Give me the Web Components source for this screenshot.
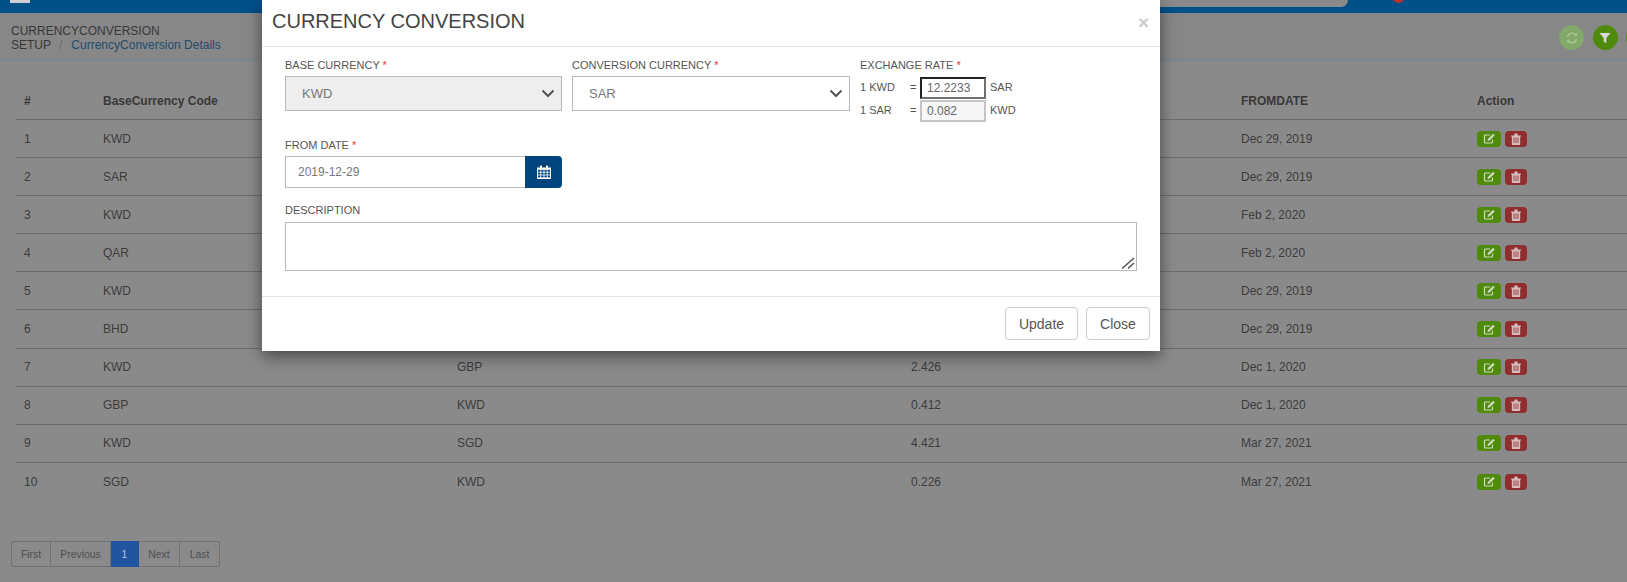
<!DOCTYPE html>
<html lang="en">
<head>
<meta charset="utf-8">
<title>Currency Conversion</title>
<style>
html,body{margin:0;padding:0;background:#8a8a8a;}
body{width:1627px;height:582px;overflow:hidden;position:relative;font-family:"Liberation Sans",Arial,sans-serif;color:#383838;}
</style>
</head>
<body>
<app-topbar></app-topbar>
<page-head></page-head>
<data-table></data-table>
<page-pager></page-pager>
<currency-modal></currency-modal>

<script>
const def=(name,html,setup)=>{
  customElements.define(name,class extends HTMLElement{
    constructor(){super();this.attachShadow({mode:'open'}).innerHTML=html;}
    connectedCallback(){if(setup)setup(this);}
  });
};
const ICONS={
  edit:`<svg width="13" height="11" viewBox="0 0 12 11"><path d="M9 6.500V9a1 1 0 0 1-1 1H2a1 1 0 0 1-1-1V3a1 1 0 0 1 1-1h4.500" fill="none" stroke="currentColor" stroke-width="1.200"/><path d="M4 8l.4-2L9.600.8l1.600 1.600L6 7.600z" fill="currentColor"/></svg>`,
  trash:`<svg width="10" height="12" viewBox="0 0 10 12"><path d="M0 2.400h10v1H9.200V11a1 1 0 0 1-1 1H1.800a1 1 0 0 1-1-1V3.400H0zM3.200 2.400L3.700.6h2.600l.5 1.800z" fill="currentColor"/><path d="M3 4.500v5.500M5 4.500v5.500M7 4.500v5.500" stroke="#8f2d2f" stroke-width=".8"/></svg>`,
  calendar:`<svg width="14" height="14" viewBox="0 0 14 14"><path d="M0 2.500h14V13a1 1 0 0 1-1 1H1a1 1 0 0 1-1-1z" fill="#fff"/><rect x="3" y="0.500" width="2" height="3" rx=".5" fill="#fff"/><rect x="9" y="0.500" width="2" height="3" rx=".5" fill="#fff"/><g fill="#00457e"><rect x="1" y="4.800" width="2.400" height="2"/><rect x="4.200" y="4.800" width="2.400" height="2"/><rect x="7.400" y="4.800" width="2.400" height="2"/><rect x="10.600" y="4.800" width="2.400" height="2"/><rect x="1" y="7.600" width="2.400" height="2"/><rect x="4.200" y="7.600" width="2.400" height="2"/><rect x="7.400" y="7.600" width="2.400" height="2"/><rect x="10.600" y="7.600" width="2.400" height="2"/><rect x="1" y="10.400" width="2.400" height="2"/><rect x="4.200" y="10.400" width="2.400" height="2"/><rect x="7.400" y="10.400" width="2.400" height="2"/><rect x="10.600" y="10.400" width="2.400" height="2"/></g></svg>`,
  refresh:`<svg width="12" height="12" viewBox="0 0 12 12" fill="none" stroke="currentColor" stroke-width="1.600"><path d="M1.500 5A4.600 4.600 0 0 1 10 3.500"/><path d="M10.500 7A4.600 4.600 0 0 1 2 8.500"/><path d="M10.800 .8v3.400H7.400z" fill="currentColor" stroke="none"/><path d="M1.200 11.200V7.800h3.400z" fill="currentColor" stroke="none"/></svg>`,
  filter:`<svg width="12" height="12" viewBox="0 0 12 12"><path d="M.5 1h11L7.300 6v5.500L4.700 9.500V6z" fill="currentColor"/></svg>`,
  chev:`<svg width="14" height="9" viewBox="0 0 14 9"><path d="M1.500 1.500L7 7l5.500-5.500" fill="none" stroke="currentColor" stroke-width="2"/></svg>`,
  grip:`<svg width="14" height="12" viewBox="0 0 14 12"><path d="M1 11.500L13 1M7 11.500L13 6" fill="none" stroke="#555" stroke-width="1.500"/></svg>`
};

def('app-topbar',`<style>
:host{display:flex;height:13px;background:#00508a;overflow:hidden;}
.burger{width:20px;height:3px;margin-left:10px;background:#cfcfcf;}
.search{width:601px;height:7px;margin-left:717px;background:#8a8a8a;border-radius:0 0 9px 9px;}
.dot{width:13px;height:13px;margin:-10px 0 0 44px;border-radius:50%;background:#b83232;}
</style><div class="burger"></div><div class="search"></div><div class="dot"></div>`);

def('page-head',`<style>
:host{display:flex;justify-content:space-between;height:45px;background:#878787;border-bottom:4px solid #82878b;font-size:12px;line-height:14px;color:#383838;}
.crumbs{padding:11px 0 0 11px;}
.crumbs div{white-space:nowrap;}
.sep{color:#6a6a6a;margin:0 9px 0 8px;}
a{color:#234c6e;text-decoration:none;}
.tools{display:flex;gap:8.500px;padding-top:12px;margin-right:-24px;}
.rnd{width:25px;height:25px;border-radius:50%;display:flex;align-items:center;justify-content:center;color:#d8d8d8;background:#4f8a0b;}
.rnd.off{background:#82a86a;color:#a8c490;}
</style>
<div class="crumbs"><div>CURRENCYCONVERSION</div><div>SETUP<span class="sep">/</span><a>CurrencyConversion Details</a></div></div>
<div class="tools"><div class="rnd off">${ICONS.refresh}</div><div class="rnd">${ICONS.filter}</div><div class="rnd"></div></div>`);

def('row-actions',`<style>
:host{display:flex;gap:4px;}
span{display:flex;align-items:center;justify-content:center;height:16px;border-radius:4px;}
.e{width:24px;background:#4f8a0b;color:#cfdcc0;}
.d{width:22px;background:#8f2d2f;color:#d8bcbc;}
</style><span class="e">${ICONS.edit}</span><span class="d">${ICONS.trash}</span>`);

def('table-row',`<style>
:host{display:grid;grid-template-columns:79px 354px 454px 330px 236px 1fr;height:38.100px;box-sizing:border-box;border-bottom:1px solid #6e6e6e;align-items:center;font-size:12px;color:#3c3c3c;}
:host([head]){height:42px;font-weight:bold;padding-top:4px;color:#383838;}
:host([last]){border-bottom:0;}
::slotted(*){padding-left:8px;}
</style><slot></slot>`);

def('data-table',`<style>
:host{display:block;margin:16px 0 0 16px;}
</style><div id="t"></div>`,el=>{
  const rows=[['1','KWD','','','Dec 29, 2019'],['2','SAR','','','Dec 29, 2019'],['3','KWD','','','Feb 2, 2020'],['4','QAR','','','Feb 2, 2020'],['5','KWD','','','Dec 29, 2019'],['6','BHD','','','Dec 29, 2019'],['7','KWD','GBP','2.426','Dec 1, 2020'],['8','GBP','KWD','0.412','Dec 1, 2020'],['9','KWD','SGD','4.421','Mar 27, 2021'],['10','SGD','KWD','0.226','Mar 27, 2021']];
  const t=el.shadowRoot.getElementById('t');
  const cell=s=>`<div>${s}</div>`;
  t.innerHTML=`<table-row head>${cell('#')}${cell('BaseCurrency Code')}${cell('')}${cell('')}${cell('FROMDATE')}${cell('Action')}</table-row>`+
   rows.map((r,i)=>`<table-row${i==9?' last':''}>${r.map(cell).join('')}<div><row-actions></row-actions></div></table-row>`).join('');
});

def('page-pager',`<style>
:host{position:absolute;left:11px;top:541px;display:flex;height:26px;font-size:10.400px;color:#505050;border:1px solid #727272;box-sizing:border-box;border-radius:2px;}
span{display:flex;align-items:center;justify-content:center;border-right:1px solid #727272;box-sizing:border-box;}
.cur{background:#22559f;color:#b4c4dc;border-color:#22559f;margin-top:-1px;margin-bottom:-1px;}
span:last-child{border-right:0;}
</style><span style="width:39px">First</span><span style="width:60px">Previous</span><span class="cur" style="width:28px">1</span><span style="width:41px">Next</span><span style="width:39px">Last</span>`);

def('form-field',`<style>
:host{display:block;font-size:11px;color:#555;}
.l{display:block;height:18px;line-height:14px;white-space:nowrap;}
</style><span class="l"><slot name="label"></slot></span><slot></slot>`);

def('select-box',`<style>
:host{display:flex;align-items:center;justify-content:space-between;box-sizing:border-box;height:35px;border:1px solid #b8b8b8;padding:0 6px 0 16px;font-size:13px;color:#777;background:#fff;}
:host([disabled]){background:#eee;}
span{color:#555;display:flex;}
</style><slot></slot><span>${ICONS.chev}</span>`);

def('rate-row',`<style>
:host{display:grid;grid-template-columns:50px 10px 66px auto;align-items:center;height:23px;font-size:11px;color:#555;}
.t{padding-bottom:2px;}
.box{box-sizing:border-box;align-self:end;height:22px;width:66px;border:2px solid #c4c4c4;background:#f7f7f7;color:#666;font-size:12px;padding-left:5px;line-height:18px;}
:host([focus]) .box{background:#fff;border-color:#6f6f6f;border-top-color:#222;border-left-color:#222;}
.u{padding-left:4px;}
</style><div class="t"><slot name="a"></slot></div><div class="t">=</div><div class="box"><slot name="v"></slot></div><div class="t u"><slot name="b"></slot></div>`);

def('date-input',`<style>
:host{display:flex;height:32px;font-size:12px;color:#777;}
.in{flex:1;box-sizing:border-box;border:1px solid #b8b8b8;border-right:0;padding-left:12px;line-height:30px;background:#fff;}
.btn{width:37px;background:#00457e;border-radius:0 4px 4px 0;display:flex;align-items:center;justify-content:center;}
</style><div class="in"><slot></slot></div><div class="btn">${ICONS.calendar}</div>`);

def('modal-button',`<style>
:host{display:flex;align-items:center;justify-content:center;box-sizing:border-box;height:33px;padding:0 12px;border:1px solid #ccc;border-radius:4px;font-size:14px;color:#555;background:#fff;}
</style><slot></slot>`);

def('text-area',`<style>
:host{display:block;position:relative;box-sizing:border-box;width:852px;height:49px;margin-top:1px;border:1px solid #b8b8b8;background:#fff;}
textarea{display:block;width:100%;height:100%;box-sizing:border-box;border:0;margin:0;padding:0;outline:0;resize:none;background:transparent;}
svg{position:absolute;right:1px;bottom:1px;}
</style><textarea aria-label="Description"></textarea>${ICONS.grip}`);

def('currency-modal',`<style>
:host{position:absolute;left:262px;top:0;width:898px;height:351px;background:#fff;box-shadow:0 5px 15px rgba(0,0,0,.5);display:flex;flex-direction:column;color:#555;}
header{height:47px;flex:none;box-sizing:border-box;border-bottom:1px solid #e5e5e5;display:flex;align-items:center;justify-content:space-between;padding:0 11px 4px 10px;}
h1{margin:0;font-size:20px;font-weight:normal;color:#444;}
.x{font-size:19px;font-weight:bold;color:#ccc;line-height:1;margin-top:3px;}
main{flex:1;box-sizing:border-box;padding:11px 23px 0;display:flex;flex-direction:column;}
.r1{display:flex;gap:10px;}
.r1>:nth-child(1){width:277px;}
.r1>:nth-child(2){width:278px;}
.from{width:277px;margin-top:16px;}
.desc{margin-top:15px;}
footer{height:55px;flex:none;box-sizing:border-box;border-top:1px solid #e5e5e5;display:flex;justify-content:flex-end;gap:8px;padding:10px 10px 0;}
.up{width:73px}.cl{width:64px}
i{font-style:normal;color:#e33;}
</style>
<header><h1>CURRENCY CONVERSION</h1><span class="x">×</span></header>
<main>
 <div class="r1">
  <form-field><span slot="label">BASE CURRENCY <i>*</i></span><select-box disabled>KWD</select-box></form-field>
  <form-field><span slot="label">CONVERSION CURRENCY <i>*</i></span><select-box>SAR</select-box></form-field>
  <form-field><span slot="label">EXCHANGE RATE <i>*</i></span>
   <rate-row focus><span slot="a">1 KWD</span><span slot="v">12.2233</span><span slot="b">SAR</span></rate-row>
   <rate-row><span slot="a">1 SAR</span><span slot="v">0.082</span><span slot="b">KWD</span></rate-row>
  </form-field>
 </div>
 <form-field class="from"><span slot="label">FROM DATE <i>*</i></span><date-input>2019-12-29</date-input></form-field>
 <form-field class="desc"><span slot="label">DESCRIPTION</span><text-area></text-area></form-field>
</main>
<footer><modal-button class="up">Update</modal-button><modal-button class="cl">Close</modal-button></footer>`);
</script>
</body>
</html>
